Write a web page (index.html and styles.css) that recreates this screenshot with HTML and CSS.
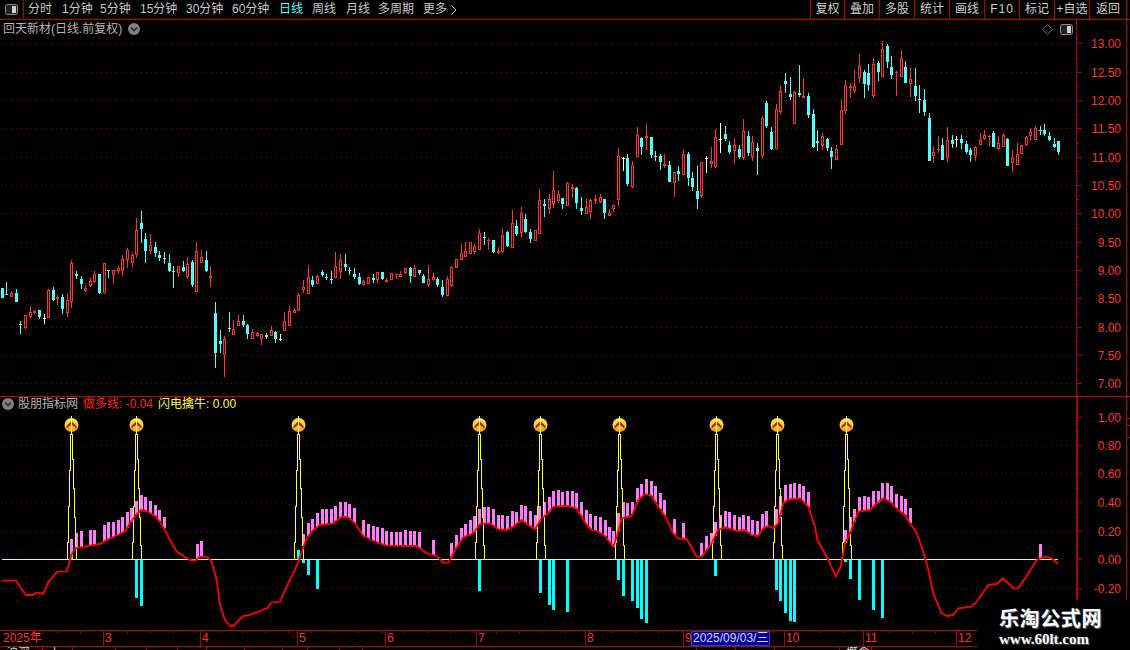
FILE: index.html
```html
<!DOCTYPE html>
<html lang="zh-CN">
<head>
<meta charset="utf-8">
<title>回天新材 日线</title>
<link rel="stylesheet" href="styles.css">
</head>
<body>
<div class="screen">
  <header class="toolbar">
    <div class="tb-icon">
      <svg class="pane-icon" width="13" height="11" viewBox="0 0 13 11"><rect x="0.5" y="0.5" width="12" height="10" rx="2" fill="#222" stroke="#8c8c8c"/><rect x="7" y="2" width="4" height="7" fill="#d0d0d0"/></svg>
    </div>
    <nav class="periods">
      <span>分时</span><span>1分钟</span><span>5分钟</span><span>15分钟</span><span>30分钟</span><span>60分钟</span>
      <span class="active">日线</span><span>周线</span><span>月线</span><span>多周期</span>
      <span class="more">更多<svg width="6" height="10" viewBox="0 0 6 10"><path d="M0.5 0.5 L5 5 L0.5 9.5" fill="none" stroke="#c8c8c8"/></svg></span>
    </nav>
    <div class="tools">
      <span>复权</span><span>叠加</span><span>多股</span><span>统计</span><span>画线</span><span class="wide">F10</span><span>标记</span><span>+自选</span><span>返回</span><span></span>
    </div>
  </header>

  <section class="panel upper">
    <svg id="price" class="plot" width="1076" height="376" viewBox="0 20 1076 376"></svg>
    <svg id="price-axis" class="axis" width="54" height="376" viewBox="1076 20 54 376"></svg>
    <div class="legend legend-upper">
      <span class="gray">回天新材(日线.前复权)</span>
      <svg width="12" height="12" viewBox="0 0 12 12"><circle cx="6" cy="6" r="6" fill="#808080"/><path d="M3 4.5 L6 7.5 L9 4.5" fill="none" stroke="#2a2a2a" stroke-width="1.6"/></svg>
    </div>
    <div class="corner">
      <svg width="11" height="11" viewBox="0 0 11 11"><path d="M5.5 0.5 L10.5 5.5 L5.5 10.5 L0.5 5.5 Z" fill="none" stroke="#666"/></svg>
      <svg width="13" height="11" viewBox="0 0 13 11"><rect x="0.5" y="0.5" width="12" height="10" rx="2" fill="#222" stroke="#8c8c8c"/><rect x="7" y="2" width="4" height="7" fill="#d0d0d0"/></svg>
    </div>
  </section>

  <section class="panel lower">
    <svg id="indicator" class="plot" width="1076" height="233" viewBox="0 397 1076 233">
      <defs>
        <linearGradient id="gold" x1="0" y1="0" x2="0" y2="1">
          <stop offset="0" stop-color="#ffe848"/>
          <stop offset="0.55" stop-color="#fdd038"/>
          <stop offset="1" stop-color="#f09020"/>
        </linearGradient>
      </defs>
    </svg>
    <svg id="indicator-axis" class="axis" width="54" height="233" viewBox="1076 397 54 233"></svg>
    <div class="legend legend-lower">
      <svg width="12" height="12" viewBox="0 0 12 12"><circle cx="6" cy="6" r="6" fill="#808080"/><path d="M3 4.5 L6 7.5 L9 4.5" fill="none" stroke="#2a2a2a" stroke-width="1.6"/></svg>
      <span class="gray">股朋指标网</span>
      <span class="red">做多线: -0.04</span>
      <span class="yellow">闪电擒牛: 0.00</span>
    </div>
  </section>

  <svg id="time-axis" class="time" width="1130" height="17" viewBox="0 630 1130 17"></svg>

  <footer class="status">
    <span>沪深</span><span>上</span><span></span><span></span><span></span><span></span><span></span><span></span><span></span><span></span><span></span><span></span><span></span><span></span><span></span><span>概念</span><span></span>
  </footer>

  <aside class="watermark">
    <div class="wm-title">乐淘公式网</div>
    <div class="wm-url">www.60lt.com</div>
  </aside>
</div>
<script src="chart.js"></script>
</body>
</html>
```
FILE: styles.css
```css
* { box-sizing: border-box; }
html, body { margin: 0; padding: 0; background: #000; }
body {
  font-family: "Liberation Sans", "Noto Sans CJK SC", sans-serif;
  font-size: 12px;
  color: #c8c8c8;
}
.screen {
  position: relative;
  display: flex;
  flex-direction: column;
  width: 1130px;
  height: 650px;
  overflow: hidden;
  background: #000;
}
.toolbar {
  display: flex;
  flex: none;
  height: 20px;
  border-bottom: 1px solid #b40000;
  line-height: 19px;
}
.tb-icon {
  display: flex;
  align-items: center;
  justify-content: center;
  width: 24px;
  padding-right: 1px;
  border-right: 1px solid #b40000;
}
.pane-icon { display: block; }
.periods {
  display: grid;
  grid-template-columns: 34px 38px 40px 46px 46px 47px 33px 34px 32px 45px auto;
  margin-left: 4px;
  white-space: nowrap;
}
.periods .active { color: #54fcfc; }
.more { display: flex; align-items: center; gap: 4px; }
.tools {
  display: grid;
  grid-template-columns: 34px repeat(7, 35px) 37px 4px;
  margin-left: auto;
  text-align: center;
  color: #d0d0d0;
}
.tools span { border-left: 1px solid #b40000; white-space: nowrap; }
.tools .wide { letter-spacing: 1px; }

.panel { position: relative; display: flex; flex: none; }
.upper { height: 376px; }
.lower { height: 234px; border-top: 1px solid #c80000; }
.plot, .axis { display: block; flex: none; }

.legend {
  position: absolute;
  display: flex;
  align-items: center;
  line-height: 14px;
  white-space: nowrap;
}
.legend-upper { top: 2px; left: 3px; gap: 6px; }
.legend-lower { top: 0; left: 2px; gap: 4px; }
.legend-lower .red { margin-left: 1px; }
.legend-lower .yellow { margin-left: 1px; }
.gray { color: #b4b4b4; }
.red { color: #ff2020; }
.yellow { color: #ffff33; }
.corner {
  position: absolute;
  top: 4px;
  left: 1042px;
  display: flex;
  align-items: center;
  gap: 7px;
}

.time { display: block; flex: none; }
.status {
  display: grid;
  flex: none;
  grid-template-columns: 43px 30px 43px 31px 31px 29px 38px 38px 25px 32px 23px 334px 39px 39px 65px 32px 258px;
  height: 3px;
  overflow: hidden;
  line-height: 12px;
  color: #e0e0e0;
}
.status span { border-right: 1px solid #b40000; padding-left: 6px; }

.watermark {
  position: absolute;
  top: 602px;
  left: 978px;
  width: 152px;
  height: 48px;
  padding: 5px 0 0 21px;
  background: #000;
  color: #fff;
}
.wm-title {
  font-family: "Noto Sans CJK SC", sans-serif;
  font-size: 20px;
  font-weight: 700;
  line-height: 22px;
  letter-spacing: 0.6px;
  white-space: nowrap;
  text-shadow: 1px 1px 1px #777;
}
.wm-url {
  margin-top: 3px;
  font-family: "Liberation Serif", serif;
  font-size: 15px;
  font-weight: 700;
  line-height: 15px;
  white-space: nowrap;
  text-shadow: 1px 1px 1px #555;
}
svg text {
  font-family: "Liberation Sans", "Noto Sans CJK SC", sans-serif;
  font-size: 12px;
}
```
FILE: chart.js
```js
var RED = '#ff3232', CYAN = '#54fcfc', WHITE = '#ffffff', LINE = '#b40000', DOT = '#8c0000';

function rect(x, y, w, h, c) {
  return '<rect x="' + x + '" y="' + y + '" width="' + w + '" height="' + h + '" fill="' + c + '" shape-rendering="crispEdges"/>';
}
function dotted(y, x1, x2) {
  return '<line x1="' + x1 + '" x2="' + x2 + '" y1="' + (y + 0.5) + '" y2="' + (y + 0.5) + '" stroke="' + DOT + '" stroke-dasharray="1 4" shape-rendering="crispEdges"/>';
}
function label(x, y, s, c, anchor) {
  return '<text x="' + x + '" y="' + y + '" fill="' + c + '" text-anchor="' + (anchor || 'start') + '">' + s + '</text>';
}

/* candles read from the reference: [x, high, bodyTop, bodyBottom, low, kind], coordinates at 3x around an origin */
var blocks = [
  { ox: 0, oy: 210, d: [
    [8,235,235,263,263,'c'],[19,216,252,255,255,'c'],[34,243,250,260,262,'r'],[49,238,250,275,275,'c'],[61,334,342,345,372,'c'],
    [76,316,316,354,356,'r'],[91,288,307,320,323,'r'],[103,300,303,309,312,'r'],[118,300,300,320,326,'c'],[133,312,325,327,342,'w'],
    [145,238,241,323,323,'r'],[160,232,241,269,272,'c'],[172,256,261,266,285,'r'],[187,252,262,297,311,'c'],[202,250,270,308,320,'r'],
    [214,150,160,275,293,'r'],[229,184,192,198,206,'c'],[244,198,208,222,237,'c'],[256,225,235,243,245,'r'],[271,205,214,227,230,'r'],
    [283,184,193,216,220,'r'],[298,192,192,249,251,'c'],[313,160,160,250,250,'r'],[325,181,181,183,204,'c'],[340,181,181,194,221,'r'],
    [355,168,175,182,191,'r'],[367,136,148,182,197,'r'],[382,115,121,149,173,'r'],[397,130,136,158,170,'r'],[409,25,60,136,143,'r'],
    [424,3,39,57,99,'c'],[436,70,87,123,159,'c'],[451,72,106,122,131,'r'],[466,96,111,129,141,'c'],[478,123,135,144,153,'c'],
    [493,126,145,147,162,'c'],[508,132,159,183,186,'c'],[520,168,183,186,234,'c'],[535,168,169,188,201,'r'],[550,153,171,183,186,'c'],
    [562,141,163,201,207,'r'],[577,150,156,225,231,'c'],[589,96,124,245,245,'r'],[604,120,142,158,159,'r'],[619,123,150,183,186,'c'],
    [631,168,198,203,231,'r'],[646,277,309,429,474,'c'],[661,360,393,402,429,'c'],[673,378,388,434,501,'r'],[688,306,354,358,366,'c'],
    [700,330,358,374,374,'r'],[715,315,334,347,347,'r'],[730,315,334,345,352,'c'],[742,342,345,372,387,'c'],[757,358,366,386,387,'r'],
    [772,365,369,378,381,'r'],[784,372,373,387,405,'r'],[799,369,376,381,387,'c'],[814,348,361,378,378,'r'],[826,363,366,387,399,'c'],
    [841,372,387,390,393,'w'],[853,306,334,362,363,'r'],[868,288,304,347,348,'r'],[883,295,301,308,308,'r'],[895,249,256,302,302,'r']
  ]},
  { ox: 300, oy: 130, d: [
    [10,450,472,480,488,'r'],[25,405,442,491,491,'r'],[37,438,450,465,471,'c'],[52,436,438,461,461,'r'],[67,420,426,435,441,'c'],
    [79,433,440,444,450,'c'],[94,423,447,450,462,'c'],[106,366,409,444,444,'r'],[121,372,391,426,447,'r'],[136,372,403,411,423,'c'],
    [148,411,421,423,435,'c'],[163,415,432,441,447,'c'],[178,430,441,462,465,'c'],[190,450,454,465,468,'r'],[205,442,442,462,462,'r'],
    [220,432,444,450,459,'c'],[232,426,427,450,459,'r'],[247,426,426,447,450,'c'],[259,444,450,456,456,'r'],[274,429,430,450,450,'r'],
    [289,432,433,436,447,'r'],[301,423,432,441,441,'r'],[316,414,415,429,431,'r'],[331,411,414,438,459,'c'],[343,405,414,441,441,'r'],
    [358,420,420,429,435,'c'],[370,432,438,459,459,'c'],[385,405,447,465,471,'r'],[400,429,442,451,453,'r'],[412,441,447,465,471,'c'],
    [427,450,471,495,501,'c'],[442,438,447,498,498,'r'],[454,408,411,468,471,'r'],[469,388,388,414,414,'r'],[484,342,370,390,390,'r'],
    [496,336,364,381,381,'r'],[511,336,336,372,372,'r'],[523,342,348,366,372,'r'],[538,297,310,360,360,'r'],[553,306,321,324,345,'c'],
    [565,324,329,332,360,'r'],[580,330,330,366,369,'c'],[595,351,363,369,372,'r'],[607,294,316,366,369,'r'],[622,303,306,348,351,'c'],
    [637,240,280,354,354,'r'],[649,270,288,312,318,'c'],[664,232,249,309,321,'r'],[676,252,267,306,309,'c'],[691,297,306,327,339,'c'],
    [706,300,300,333,333,'r'],[718,177,210,312,312,'r'],[733,207,222,228,261,'c'],[748,192,207,237,252,'r'],[760,123,180,222,234,'r'],
    [775,180,192,213,219,'r'],[787,204,204,222,237,'c'],[802,156,159,228,228,'r'],[817,162,171,177,204,'r'],[829,171,174,219,237,'c'],
    [844,201,234,243,255,'c'],[859,207,231,252,252,'r'],[871,207,210,246,267,'r'],[886,195,207,213,222,'r'],[901,192,201,216,219,'r'],
    [913,207,207,249,267,'c'],[928,237,249,258,258,'r'],[940,225,225,237,246,'r'],[955,54,78,210,228,'r']
  ]},
  { ox: 620, oy: 30, d: [
    [9,381,385,387,423,'w'],[22,372,384,462,468,'c'],[37,393,405,471,474,'r'],[52,291,315,381,381,'r'],[64,321,324,351,375,'c'],
    [79,282,318,324,360,'r'],[94,321,321,375,384,'c'],[106,363,378,381,393,'c'],[121,372,378,396,420,'c'],[133,372,402,408,414,'r'],
    [148,393,405,456,456,'c'],[163,426,426,459,501,'r'],[175,408,423,432,453,'c'],[190,361,372,435,435,'r'],[205,366,372,444,468,'c'],
    [217,426,444,471,483,'c'],[232,408,483,507,537,'c'],[244,396,396,498,504,'r'],[259,378,384,386,430,'w'],[274,351,393,402,414,'r'],
    [286,297,321,411,414,'r'],[301,279,327,329,369,'w'],[316,288,312,327,333,'c'],[328,333,345,366,372,'c'],[343,324,345,363,402,'r'],
    [358,345,357,381,387,'c'],[370,267,303,384,390,'r'],[385,303,318,369,378,'c'],[397,318,336,381,393,'r'],[412,339,354,363,435,'c'],
    [427,258,264,378,384,'r'],[439,213,219,288,294,'c'],[454,291,306,357,360,'c'],[469,222,237,357,357,'r'],[481,168,183,246,255,'r'],
    [496,129,153,162,189,'c'],[511,141,192,201,210,'c'],[523,183,186,282,282,'r'],[538,105,189,195,201,'c'],[550,144,198,204,204,'r'],
    [565,189,198,255,264,'c'],[580,237,252,351,354,'c'],[592,300,333,339,363,'c'],[607,309,318,348,360,'r'],[622,324,327,354,363,'c'],
    [634,351,363,381,417,'c'],[649,345,357,390,390,'r'],[664,207,240,345,345,'r'],[676,150,165,243,252,'r'],[691,159,168,174,204,'r'],
    [703,120,168,183,189,'r'],[718,72,108,144,159,'r'],[733,120,126,162,204,'c'],[745,102,129,165,183,'c']
  ]},
  { ox: 850, oy: 30, d: [
    [70,84,102,198,204,'r'],[85,93,99,126,153,'c'],[97,33,57,141,141,'r'],[112,42,48,96,114,'c'],[124,78,111,135,147,'c'],
    [139,123,126,130,198,'r'],[154,60,84,141,141,'r'],[166,93,111,159,159,'c'],[181,114,147,162,201,'r'],[196,114,168,198,213,'c'],
    [208,165,207,210,249,'c'],[223,177,210,246,258,'c'],[238,249,264,393,393,'c'],[250,348,366,378,399,'r'],[265,318,357,360,369,'r'],
    [277,324,345,390,390,'c'],[292,291,330,384,396,'r'],[307,315,330,342,354,'c'],[319,318,327,329,351,'w'],[334,315,327,339,357,'c'],
    [349,333,342,366,372,'c'],[361,354,360,375,396,'c'],[376,348,351,378,393,'r'],[391,309,330,345,345,'r'],[403,300,315,327,330,'r'],
    [418,315,318,321,348,'r'],[430,303,309,351,351,'c'],[445,318,339,357,360,'r'],[460,309,315,351,351,'r'],[472,324,327,408,408,'c'],
    [487,360,381,399,426,'r'],[502,339,372,405,405,'r'],[514,345,345,372,372,'r'],[529,318,321,345,348,'r'],[541,294,306,318,333,'r'],
    [556,288,294,330,330,'r'],[571,288,300,303,315,'c'],[583,282,300,312,318,'c'],[598,306,318,330,333,'c'],[613,324,342,351,354,'c'],
    [625,333,333,366,375,'c']
  ]}
];

function candles() {
  var out = '';
  blocks.forEach(function (b) {
    b.d.forEach(function (k) {
      var c = Math.floor(b.ox + k[0] / 3);
      var hi = Math.round(b.oy + k[1] / 3), top = Math.round(b.oy + k[2] / 3);
      var bot = Math.round(b.oy + k[3] / 3), lo = Math.round(b.oy + k[4] / 3);
      var col = k[5] === 'r' ? RED : k[5] === 'c' ? CYAN : WHITE;
      var h = Math.max(bot - top, 1);
      if (top > hi) out += rect(c, hi, 1, top - hi, col);
      if (lo > top + h) out += rect(c, top + h, 1, lo - top - h, col);
      out += rect(c - 1, top, 3, h, col);
      if (k[5] === 'r' && h > 2) out += rect(c, top + 1, 1, h - 2, '#000');
    });
  });
  return out;
}

/* price panel */
var priceGrid = [43, 72, 100, 128, 157, 185, 213, 242, 270, 298, 327, 355, 383];
var priceLabels = ['13.00', '12.50', '12.00', '11.50', '11.00', '10.50', '10.00', '9.50', '9.00', '8.50', '8.00', '7.50', '7.00'];
var s = '';
priceGrid.forEach(function (y) { s += dotted(y, 1, 1075); });
s += candles();
document.getElementById('price').innerHTML = s;

function axis(grid, labels, yTop, yEnd, thick) {
  var a = rect(1076, yTop, thick, yEnd - yTop, LINE);
  a += rect(1126, yTop, 1, yEnd - yTop, LINE);
  grid.forEach(function (y, i) {
    a += rect(1076, y, 6, 1, LINE);
    if (i < grid.length - 1) a += rect(1076, Math.round((y + grid[i + 1]) / 2), 3, 1, LINE);
    a += label(1121, y + 5, labels[i], RED, 'end');
  });
  return a;
}
document.getElementById('price-axis').innerHTML = axis(priceGrid, priceLabels, 20, 396, 1);

/* indicator panel: red curve */
function toPx(ox, oy, list) {
  return list.map(function (p) { return [ox + p[0] / 3, oy + p[1] / 3]; });
}
var curve = [].concat(
  toPx(0, 530, [[6,152],[48,152],[60,170],[78,195],[98,195],[108,188],[130,192],[145,157],[172,125],[200,124],[208,100],[214,75],[225,55],[270,47],[300,42],[320,30],[365,10],[378,0]]),
  [[130,523],[136,515],[141,510],[146,511],[150,513],[155,516],[160,522]],
  toPx(0, 530, [[495,0],[510,30],[530,65],[570,90],[585,92],[600,80],[620,80],[635,95],[650,150],[660,225],[675,270],[690,288],[700,288],[730,258],[750,255],[800,235],[815,218],[840,215]]),
  toPx(270, 410, [[45,540],[70,490],[85,455],[95,425],[110,385],[130,360],[150,345],[190,340],[215,320],[235,322],[255,340],[280,378],[320,397],[350,407],[440,408],[470,430],[500,438],[520,458],[535,458],[555,420],[580,382],[610,370],[630,342],[660,340],[685,358],[710,360],[730,350],[755,330],[775,345],[795,358],[815,325],[835,310],[850,290],[895,288]]),
  toPx(570, 410, [[20,296],[50,345],[65,360],[85,365],[105,378],[130,410],[140,380],[155,325],[185,318],[205,270],[225,252],[245,258],[265,290],[285,318],[310,370],[325,385],[350,387],[380,440],[395,440],[425,400],[445,358],[465,352],[500,363],[525,360],[545,375],[565,378],[580,355],[595,348],[610,355],[625,340],[640,280],[655,268],[690,265],[715,290],[735,350],[742,390],[770,440],[798,500]]),
  toPx(830, 400, [[32,500],[45,430],[60,400],[85,335],[120,330],[135,315],[160,295],[180,305],[200,327],[225,345],[240,370],[260,400],[280,455],[295,510]]),
  toPx(660, 530, [[820,190],[845,250],[860,258],[880,255],[895,235],[935,230],[950,215],[985,165],[1010,162],[1030,145],[1060,175],[1075,175],[1105,130],[1130,90],[1155,80],[1175,85],[1195,102]])
);
function curveY(x) {
  for (var i = 1; i < curve.length; i++) {
    if (x <= curve[i][0]) {
      var a = curve[i - 1], b = curve[i];
      return a[1] + (b[1] - a[1]) * (x - a[0]) / (b[0] - a[0] || 1);
    }
  }
  return curve[curve.length - 1][1];
}

/* pink bars: [x, top]; they stand on the curve */
var pink = [].concat(
  [[71,539],[76,533],[81,531],[90,530],[94,530],[104,525],[108,522],[113,522],[118,520],[122,517],[127,512],[131,508],[136,501],[141,495],[145,497],[150,501],[155,505],[159,510],[164,517],[197,544],[201,541]],
  toPx(270, 410, [[101,372],[115,340],[128,327],[142,309],[157,297],[170,297],[184,297],[196,288],[211,276],[226,276],[238,282],[253,294],[280,330],[295,342],[310,348],[322,351],[337,354],[349,363],[364,366],[379,366],[391,366],[406,360],[421,363],[433,363],[448,366],[490,390],[544,399],[559,375],[574,354],[587,342],[601,330],[613,318],[628,297],[643,291],[655,291],[670,297],[685,315],[697,315],[712,318],[727,303],[739,306],[754,285],[766,288],[781,303],[796,315],[808,288],[823,276],[838,261],[850,243],[865,240],[877,246],[892,243]]),
  toPx(570, 410, [[7,243],[19,249],[34,276],[49,300],[61,312],[76,318],[91,321],[105,330],[118,351],[130,363],[145,309],[160,276],[172,279],[187,276],[202,234],[214,222],[229,207],[244,213],[256,228],[271,249],[283,270],[313,327],[340,339],[394,399],[409,378],[424,369],[436,336],[451,315],[466,303],[478,306],[493,315],[508,321],[520,315],[535,318],[547,330],[562,333],[577,312],[589,303],[619,297],[631,258],[646,225],[661,222],[673,219],[688,222],[700,228],[715,246],[826,360],[841,321],[853,297],[868,261],[883,258]]),
  [[864,496],[868,497],[873,491],[878,491],[882,483],[887,483],[891,486],[896,494],[901,496],[905,499],[910,508],[1040,544]]
);

/* cyan bars: [x, y1, y2] */
var cyan = [[71,553,560],[136,559,598],[141,559,606],[298,550,560],[303,559,563],[308,559,575],[317,559,589],[479,559,591],[540,559,593],[549,559,605],[553,559,610],[567,559,612],[618,559,580],[623,559,596],[632,559,601],[637,559,608],[641,559,619],[646,559,623],[715,559,576],[776,559,590],[780,559,601],[785,559,613],[790,559,621],[794,559,622],[845,559,562],[850,559,579],[859,559,600],[873,559,610],[882,559,618]];

var signals = [71, 136, 298, 479, 540, 619, 716, 777, 846];

function spike(cx) {
  var c = Math.round(cx);
  var steps = [[-4,559],[-4,542],[-3,542],[-3,506],[-2,506],[-2,470],[-1,470],[-1,434],[1,434],[1,459],[2,459],[2,488],[3,488],[3,517],[4,517],[4,545],[5,545],[5,559]];
  return '<polyline fill="none" stroke="#ffff33" shape-rendering="crispEdges" points="' +
    steps.map(function (p) { return (c + p[0] + 0.5) + ',' + (p[1] + 0.5); }).join(' ') + '"/>';
}
function marker(cx) {
  var c = Math.round(cx) + 0.5;
  return '<circle cx="' + c + '" cy="425" r="7" fill="url(#gold)"/>' +
    '<path d="M' + (c - 5) + ' 426 L' + c + ' 421 L' + (c + 5) + ' 426 L' + (c + 5) + ' 428.5 L' + c + ' 424.5 L' + (c - 5) + ' 428.5 Z" fill="#b81c10"/>' +
    '<line x1="' + c + '" x2="' + c + '" y1="416" y2="434" stroke="#ffff66" shape-rendering="crispEdges"/>';
}

var q = '';
[445, 473, 502, 531, 588].forEach(function (y) { q += dotted(y, 1, 1075); });
pink.forEach(function (p) {
  var c = Math.floor(p[0]), top = Math.round(p[1]), bot = Math.round(curveY(p[0]));
  if (bot > top) q += rect(c - 1, top, 3, bot - top, '#fb7cfb');
});
cyan.forEach(function (b) { q += rect(b[0] - 1, b[1], 3, b[2] - b[1], '#00ffff'); });
q += rect(2, 559, 1056, 1, '#ffff33');
signals.forEach(function (x) { q += spike(x); });
q += '<polyline fill="none" stroke="#ff0000" stroke-width="1.8" stroke-linejoin="round" points="' +
  curve.map(function (p) { return p[0].toFixed(1) + ',' + p[1].toFixed(1); }).join(' ') + '"/>';
signals.forEach(function (x) { q += marker(x); });
document.getElementById('indicator').insertAdjacentHTML('beforeend', q);

var indGrid = [417, 445, 473, 502, 531, 559, 588];
var indLabels = ['1.00', '0.80', '0.60', '0.40', '0.20', '0.00', '-0.20'];
document.getElementById('indicator-axis').innerHTML =
  axis(indGrid, indLabels, 397, 600, 2) +
  rect(1127, 418, 3, 1, LINE) + rect(1127, 425, 3, 1, LINE) + rect(1127, 437, 3, 1, LINE);

/* time axis */
var t = rect(0, 630, 978, 1, LINE) + rect(0, 646, 978, 1, LINE);
for (var x = 11; x < 978; x += 23.1) t += rect(Math.round(x), 631, 1, 2, LINE);
[[103,'3'],[200,'4'],[297,'5'],[385,'6'],[476,'7'],[585,'8'],[683,'9'],[784,'10'],[863,'11'],[956,'12']].forEach(function (m) {
  t += rect(m[0], 631, 1, 15, LINE);
  t += label(m[0] + 2, 642, m[1], RED);
});
t += label(3, 642, '2025年', RED);
t += '<rect x="691.5" y="631.5" width="78" height="14" fill="#000090" stroke="#3838c8" shape-rendering="crispEdges"/>';
t += label(693, 642, '2025/09/03/三', '#d8d8ff');
document.getElementById('time-axis').innerHTML = t;
```
